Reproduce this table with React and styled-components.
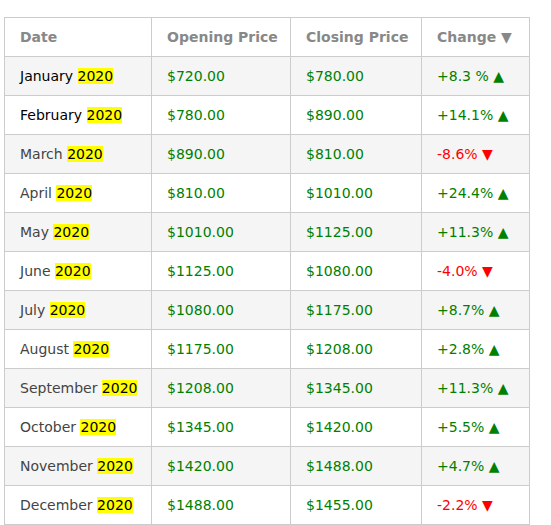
import React from 'react'
import styled, { createGlobalStyle } from 'styled-components'

const GlobalStyle = createGlobalStyle`
  body {
    margin: 0;
    background: #fff;
    font-family: Verdana, "DejaVu Sans", sans-serif;
  }
`

const Page = styled.div`
  padding: 17px 0 0 4px;
`

const Table = styled.table`
  border-collapse: collapse;
  table-layout: fixed;
  width: 525px;
  font-size: 14px;
`

const Th = styled.th`
  height: 38px;
  padding: 0 15px;
  border: 1px solid #ccc;
  text-align: left;
  color: #888;
  font-weight: bold;
  white-space: nowrap;
`

const Row = styled.tr`
  background: ${({ striped }) => (striped ? '#f5f5f5' : '#fff')};
`

const Td = styled.td`
  height: 38px;
  padding: 0 15px;
  border: 1px solid #ccc;
  white-space: nowrap;
  color: ${({ tone }) =>
    tone === 'up' ? '#008000' : tone === 'down' ? '#f00' : tone === 'dark' ? '#000' : '#444'};
`

const Year = styled.mark`
  background: #ff0;
  color: #000;
`

const rows = [
  ['January', '$720.00', '$780.00', '+8.3 %'],
  ['February', '$780.00', '$890.00', '+14.1%'],
  ['March', '$890.00', '$810.00', '-8.6%'],
  ['April', '$810.00', '$1010.00', '+24.4%'],
  ['May', '$1010.00', '$1125.00', '+11.3%'],
  ['June', '$1125.00', '$1080.00', '-4.0%'],
  ['July', '$1080.00', '$1175.00', '+8.7%'],
  ['August', '$1175.00', '$1208.00', '+2.8%'],
  ['September', '$1208.00', '$1345.00', '+11.3%'],
  ['October', '$1345.00', '$1420.00', '+5.5%'],
  ['November', '$1420.00', '$1488.00', '+4.7%'],
  ['December', '$1488.00', '$1455.00', '-2.2%'],
]

export default function App() {
  return (
    <Page>
      <GlobalStyle />
      <Table>
        <colgroup>
          <col style={{ width: 147 }} />
          <col style={{ width: 139 }} />
          <col style={{ width: 131 }} />
          <col style={{ width: 108 }} />
        </colgroup>
        <thead>
          <tr>
            <Th>Date</Th>
            <Th>Opening Price</Th>
            <Th>Closing Price</Th>
            <Th>Change ▼</Th>
          </tr>
        </thead>
        <tbody>
          {rows.map(([month, open, close, change], i) => {
            const down = change.startsWith('-')
            return (
              <Row key={month} striped={i % 2 === 0}>
                <Td tone={i < 2 ? 'dark' : undefined}>
                  {month} <Year>2020</Year>
                </Td>
                <Td tone="up">{open}</Td>
                <Td tone="up">{close}</Td>
                <Td tone={down ? 'down' : 'up'}>
                  {change} {down ? '▼' : '▲'}
                </Td>
              </Row>
            )
          })}
        </tbody>
      </Table>
    </Page>
  )
}
